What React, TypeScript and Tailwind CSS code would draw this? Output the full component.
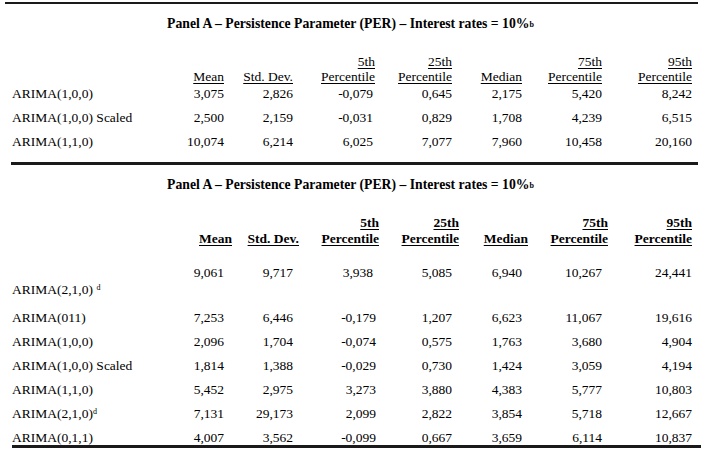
const headers: [string, string][] = [
  ['', 'Mean'],
  ['', 'Std. Dev.'],
  ['5th', 'Percentile'],
  ['25th', 'Percentile'],
  ['', 'Median'],
  ['75th', 'Percentile'],
  ['95th', 'Percentile'],
];

const panel1 = [
  ['ARIMA(1,0,0)', '3,075', '2,826', '-0,079', '0,645', '2,175', '5,420', '8,242'],
  ['ARIMA(1,0,0) Scaled', '2,500', '2,159', '-0,031', '0,829', '1,708', '4,239', '6,515'],
  ['ARIMA(1,1,0)', '10,074', '6,214', '6,025', '7,077', '7,960', '10,458', '20,160'],
];

const panel2First = ['9,061', '9,717', '3,938', '5,085', '6,940', '10,267', '24,441'];

const panel2 = [
  ['ARIMA(011)', '7,253', '6,446', '-0,179', '1,207', '6,623', '11,067', '19,616'],
  ['ARIMA(1,0,0)', '2,096', '1,704', '-0,074', '0,575', '1,763', '3,680', '4,904'],
  ['ARIMA(1,0,0) Scaled', '1,814', '1,388', '-0,029', '0,730', '1,424', '3,059', '4,194'],
  ['ARIMA(1,1,0)', '5,452', '2,975', '3,273', '3,880', '4,383', '5,777', '10,803'],
  ['ARIMA(2,1,0)|d', '7,131', '29,173', '2,099', '2,822', '3,854', '5,718', '12,667'],
  ['ARIMA(0,1,1)', '4,007', '3,562', '-0,099', '0,667', '3,659', '6,114', '10,837'],
];

// column right edges differ a little between the two panels
const grid1 = 'grid grid-cols-[150px_62px_69px_82px_77px_70px_80px_90px] pl-[12px]';
const grid2 = 'grid grid-cols-[150px_70px_67px_80px_80px_69px_80px_84px] pl-[12px]';

// numbers in panel 1 sit flush, except the 5th percentile column
const pad1 = ['', '', 'pr-[2px]', '', '', '', ''];
const pad2 = ['pr-[8px]', 'pr-[6px]', 'pr-[3px]', 'pr-[7px]', 'pr-[6px]', 'pr-[6px]', ''];
const pad2First = ['pr-[8px]', 'pr-[6px]', 'pr-[6px]', 'pr-[7px]', 'pr-[6px]', 'pr-[6px]', ''];

function Title() {
  return (
    <div className="text-center font-bold leading-[15px] text-[13.7px]">
      Panel A – Persistence Parameter (PER) – Interest rates = 10%
      <sup className="text-[8px] relative -top-[1px]">b</sup>
    </div>
  );
}

function Label({ text }: { text: string }) {
  const [name, note] = text.split('|');
  return (
    <div className="whitespace-nowrap">
      {name}
      {note && <sup className="text-[8px]">{note}</sup>}
    </div>
  );
}

function HeaderRow({ bold, grid, lh }: { bold?: boolean; grid: string; lh: string }) {
  return (
    <div className={grid}>
      <div />
      {headers.map(([a, b], i) => (
        <div key={i} className={`flex flex-col items-end ${lh} ${bold ? 'font-bold' : ''}`}>
          {a ? <span className="underline underline-offset-[2px]">{a}</span> : <span>{'\u00a0'}</span>}
          <span className="underline underline-offset-[2px] whitespace-nowrap">{b}</span>
        </div>
      ))}
    </div>
  );
}

export default function App() {
  return (
    <div className="w-[701px] h-[449px] overflow-hidden bg-white text-black text-[13.5px] font-[Liberation_Serif,serif]">
      <div className="mt-[2px] ml-[5px] w-[693px] h-[2px] bg-[#1a1a1a]" />

      {/* panel 1 */}
      <div className="mt-[12px]">
        <Title />
      </div>
      <div className="mt-[23px]">
        <HeaderRow grid={grid1} lh="leading-[15px]" />
      </div>
      <div className="mt-[-2px]">
        {panel1.map((row) => (
          <div key={row[0]} className={`${grid1} h-[24px] leading-[24px]`}>
            <Label text={row[0]} />
            {row.slice(1).map((v, i) => (
              <div key={i} className={`text-right ${pad1[i]}`}>{v}</div>
            ))}
          </div>
        ))}
      </div>

      <div className="mt-[8px] ml-[11px] w-[687px] h-[3px] bg-[#1a1a1a]" />

      {/* panel 2 */}
      <div className="mt-[12px]">
        <Title />
      </div>
      <div className="mt-[23px]">
        <HeaderRow bold grid={grid2} lh="leading-[16px]" />
      </div>
      <div className={`${grid2} h-[59px] leading-[15px]`}>
        <div className="pt-[35px] whitespace-nowrap">
          ARIMA(2,1,0) <sup className="text-[8px]">d</sup>
        </div>
        {panel2First.map((v, i) => (
          <div key={i} className={`pt-[18px] text-right ${pad2First[i]}`}>{v}</div>
        ))}
      </div>
      {panel2.map((row, r) => (
        <div
          key={row[0]}
          className={`${grid2} leading-[24px] ${r === panel2.length - 1 ? 'h-[19px]' : 'h-[24px]'}`}
        >
          <Label text={row[0]} />
          {row.slice(1).map((v, i) => (
            <div key={i} className={`text-right ${pad2[i]}`}>{v}</div>
          ))}
        </div>
      ))}

      <div className="ml-[12px] w-[689px] h-[3px] bg-[#1a1a1a]" />
    </div>
  );
}
